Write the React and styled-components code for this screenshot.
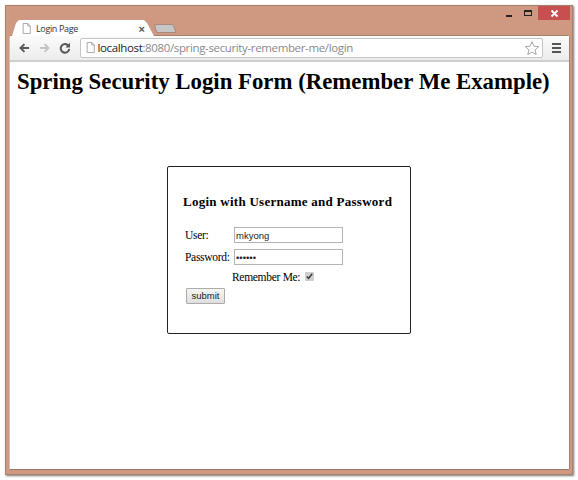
import React from "react";
import styled, { createGlobalStyle } from "styled-components";

const Global = createGlobalStyle`
  html, body { margin: 0; padding: 0; background: #fff; }
  * { box-sizing: border-box; }
`;

const App = () => (
  <>
    <Global />
    <Page>
      <Window>
        <WindowControls>
          <Minimize><span /></Minimize>
          <Maximize><span /></Maximize>
          <Close>
            <svg width="9" height="9" viewBox="0 0 9 9">
              <path d="M1.5 1.5l6 6M7.5 1.5l-6 6" stroke="#fff" strokeWidth="1.8" />
            </svg>
          </Close>
        </WindowControls>
        <TabStrip>
          <Tab>
            <PageIcon size={11} />
            <TabTitle>Login Page</TabTitle>
            <TabClose>×</TabClose>
          </Tab>
          <NewTab />
        </TabStrip>
        <Browser>
          <Toolbar>
            <NavIcon viewBox="0 0 14 14">
              <path d="M13 7H3.5M7.5 2.5L3 7l4.5 4.5" fill="none" stroke="#5a5a5a" strokeWidth="2.4" />
            </NavIcon>
            <NavIcon viewBox="0 0 14 14">
              <path d="M1 7h9.5M6.5 2.5L11 7l-4.5 4.5" fill="none" stroke="#c4c4c4" strokeWidth="2.4" />
            </NavIcon>
            <NavIcon viewBox="0 0 14 14">
              <path d="M11.4 5A5 5 0 1 0 12 8" fill="none" stroke="#5a5a5a" strokeWidth="2.4" />
              <path d="M12.8 1v5.4H7.6z" fill="#5a5a5a" />
            </NavIcon>
            <Omnibox>
              <PageIcon size={11} />
              <Url>
                <Host>localhost</Host>:8080/spring-security-remember-me/login
              </Url>
              <svg width="16" height="16" viewBox="0 0 18 17">
                <path
                  d="M9 1.5l2.2 5 5.3.5-4 3.6 1.2 5.3L9 13.1l-4.7 2.8 1.2-5.3-4-3.6 5.3-.5z"
                  fill="#fff"
                  stroke="#9a9a9a"
                />
              </svg>
            </Omnibox>
            <Menu>
              <span />
              <span />
              <span />
            </Menu>
          </Toolbar>
          <Content>
            <Heading>Spring Security Login Form (Remember Me Example)</Heading>
            <LoginBox>
              <LoginTitle>Login with Username and Password</LoginTitle>
              <Form onSubmit={(e) => e.preventDefault()}>
                <Row>
                  <Label>User:</Label>
                  <Input type="text" defaultValue="mkyong" />
                </Row>
                <Row>
                  <Label>Password:</Label>
                  <Input type="password" defaultValue="123456" />
                </Row>
                <RememberRow>
                  Remember Me:
                  <Check type="checkbox" defaultChecked />
                </RememberRow>
                <Submit type="submit">submit</Submit>
              </Form>
            </LoginBox>
          </Content>
        </Browser>
      </Window>
    </Page>
  </>
);

const PageIcon = ({ size }) => (
  <svg width={size} height={size} viewBox="0 0 13 13" style={{ flex: "none" }}>
    <path d="M2.5.5h5.5l3 3v9h-8.5z" fill="#fff" stroke="#9a9a9a" />
    <path d="M8 .5v3h3" fill="none" stroke="#9a9a9a" />
  </svg>
);

export default App;

const Page = styled.div`
  width: 578px;
  height: 480px;
  padding: 5px;
  background: #fff;
`;

const Window = styled.div`
  position: relative;
  width: 568px;
  height: 470px;
  display: flex;
  flex-direction: column;
  padding: 14px 3px 5px 4px;
  background: #cf9880;
  border: 1px solid #a8806c;
  box-shadow: 1px 1px 2px #777;
`;

const WindowControls = styled.div`
  position: absolute;
  top: 0;
  right: 2px;
  display: flex;
  align-items: stretch;
  height: 14px;
`;

const Minimize = styled.div`
  width: 18px;
  display: flex;
  align-items: center;
  justify-content: center;

  span {
    display: block;
    width: 6px;
    height: 2px;
    margin-top: 5px;
    background: #222;
  }
`;

const Maximize = styled.div`
  width: 20px;
  display: flex;
  align-items: center;
  justify-content: center;

  span {
    display: block;
    width: 8px;
    height: 6px;
    border: 1px solid #222;
    border-top-width: 2px;
  }
`;

const Close = styled.div`
  width: 32px;
  display: flex;
  align-items: center;
  justify-content: center;
  background: #c74f4f;
`;

const TabStrip = styled.div`
  height: 16px;
  display: flex;
  align-items: flex-end;
  flex: none;
`;

const Tab = styled.div`
  width: 142px;
  height: 16px;
  margin-left: 2px;
  padding: 1px 9px 0 9px;
  display: flex;
  align-items: center;
  gap: 4px;
  background: #fff;
  clip-path: polygon(0 100%, 4px 3px, 7px 0, 132px 0, 135px 3px, 142px 100%);
`;

const TabTitle = styled.span`
  flex: 1;
  font: 9px/12px "Open Sans", sans-serif;
  letter-spacing: -0.35px;
  color: #333;
`;

const TabClose = styled.span`
  font: bold 11px/12px "Liberation Sans", sans-serif;
  color: #555;
`;

const NewTab = styled.div`
  width: 20px;
  height: 9px;
  margin: 0 0 3px 1px;
  background: #c6c6c6;
  border: 1px solid #a98a7c;
  border-radius: 3px 2px 0 0;
  transform: skewX(20deg);
`;

const Browser = styled.div`
  flex: 1;
  display: flex;
  flex-direction: column;
  min-height: 0;
  background: #fff;
  border-radius: 2px 2px 0 0;
  box-shadow: 0 -1px 0 #a8806c, 1px 0 0 #a8806c, -1px 0 0 #c9c2be, 0 1px 0 #9c7866;
`;

const Toolbar = styled.div`
  height: 26px;
  flex: none;
  display: flex;
  align-items: center;
  padding: 0 8px 1px 8px;
  background: linear-gradient(#fbfbfb, #ececec);
  border-bottom: 2px solid #cfcfcf;
`;

const NavIcon = styled.svg`
  width: 12px;
  height: 12px;
  flex: none;
  margin-right: 8.5px;
`;

const Omnibox = styled.div`
  flex: 1;
  height: 20px;
  padding: 0 2px 0 4px;
  display: flex;
  align-items: center;
  gap: 2px;
  background: #fff;
  border: 1px solid #c4c4c4;
  border-radius: 2px;
`;

const Url = styled.div`
  flex: 1;
  font: 11.5px/18px "Open Sans", sans-serif;
  letter-spacing: -0.36px;
  color: #8a8a8a;
  white-space: nowrap;
  overflow: hidden;
`;

const Host = styled.span`
  color: #222;
`;

const Menu = styled.div`
  width: 9px;
  margin-left: 9px;
  display: flex;
  flex-direction: column;
  gap: 2px;

  span {
    height: 2px;
    background: #555;
  }
`;

const Content = styled.div`
  flex: 1;
  min-height: 0;
  padding: 6px 7px 0 7px;
  font-family: "Liberation Serif", serif;
  color: #000;
`;

const Heading = styled.h1`
  margin: 0;
  font: bold 22.8px/28px "Liberation Serif", serif;
  white-space: nowrap;
`;

const LoginBox = styled.div`
  width: 244px;
  height: 168px;
  margin: 70px 0 0 150px;
  padding: 27px 15px 0 15px;
  background: #fff;
  border: 1px solid #222;
  border-radius: 2px;
`;

const LoginTitle = styled.h3`
  margin: 0 0 14px 0;
  font: bold 13px/16px "Liberation Serif", serif;
  letter-spacing: 0.26px;
  white-space: nowrap;
`;

const Form = styled.form`
  display: flex;
  flex-direction: column;
  align-items: flex-start;
`;

const Row = styled.div`
  display: flex;
  align-items: center;
  height: 22px;
  padding-left: 2px;
`;

const Label = styled.label`
  width: 49px;
  font-size: 11.5px;
  letter-spacing: -0.3px;
`;

const Input = styled.input`
  width: 109px;
  height: 16px;
  padding: 0 1px;
  margin: 0;
  font: 9.5px "Liberation Sans", sans-serif;
  color: #222;
  background: #fff;
  border: 1px solid #b4b4b4;
  outline: none;
`;

const RememberRow = styled.div`
  display: flex;
  align-items: center;
  height: 17px;
  padding-left: 49px;
  font-size: 11.5px;
  letter-spacing: -0.3px;
`;

const Check = styled.input`
  width: 9px;
  height: 9px;
  margin: 0 0 1px 5px;
  accent-color: #cfcfcf;
`;

const Submit = styled.button`
  width: 39px;
  height: 16px;
  margin: 3px 0 0 3px;
  padding: 0;
  font: 9.5px/14px "Liberation Sans", sans-serif;
  color: #222;
  background: linear-gradient(#f6f6f6, #dedede);
  border: 1px solid #acacac;
  border-radius: 1px;
`;
